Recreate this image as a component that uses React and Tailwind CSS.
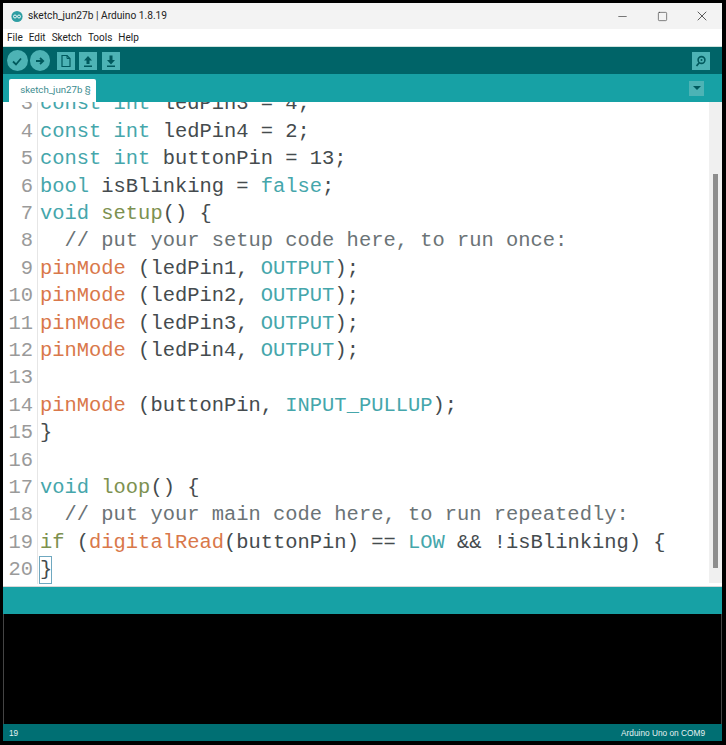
import { Minus, Square, X } from 'lucide-react';

const mono = "font-['Liberation_Mono','DejaVu_Sans_Mono',monospace]";
const teal = 'text-[#45a6ab]';
const orange = 'text-[#d9784a]';
const olive = 'text-[#7d9150]';
const dark = 'text-[#454b4e]';
const comment = 'text-[#6b7376]';

const lines = [
    [3, [['const', teal], [' ', dark], ['int', teal], [' ledPin3 = 4;', dark]]],
    [4, [['const', teal], [' ', dark], ['int', teal], [' ledPin4 = 2;', dark]]],
    [5, [['const', teal], [' ', dark], ['int', teal], [' buttonPin = 13;', dark]]],
    [6, [['bool', teal], [' isBlinking = ', dark], ['false', teal], [';', dark]]],
    [7, [['void', teal], [' ', dark], ['setup', olive], ['() {', dark]]],
    [8, [['  // put your setup code here, to run once:', comment]]],
    [9, [['pinMode', orange], [' (ledPin1, ', dark], ['OUTPUT', teal], [');', dark]]],
    [10, [['pinMode', orange], [' (ledPin2, ', dark], ['OUTPUT', teal], [');', dark]]],
    [11, [['pinMode', orange], [' (ledPin3, ', dark], ['OUTPUT', teal], [');', dark]]],
    [12, [['pinMode', orange], [' (ledPin4, ', dark], ['OUTPUT', teal], [');', dark]]],
    [13, []],
    [14, [['pinMode', orange], [' (buttonPin, ', dark], ['INPUT_PULLUP', teal], [');', dark]]],
    [15, [['}', dark]]],
    [16, []],
    [17, [['void', teal], [' ', dark], ['loop', olive], ['() {', dark]]],
    [18, [['  // put your main code here, to run repeatedly:', comment]]],
    [19, [['if', olive], [' (', dark], ['digitalRead', orange], ['(buttonPin) == ', dark], ['LOW', teal], [' && !isBlinking) {', dark]]],
];

const ToolIcon = ({ children, className = 'w-[18px] h-[18px]' }) => (
    <div className={`${className} bg-[#4db3b5] flex items-center justify-center`}>
        <svg width="14" height="14" viewBox="0 0 14 14">{children}</svg>
    </div>
);

const RoundIcon = ({ children }) => (
    <div className="w-[20.5px] h-[20.5px] rounded-full bg-[#4db3b5] flex items-center justify-center">
        <svg width="14" height="14" viewBox="0 0 14 14">{children}</svg>
    </div>
);

const CodeLine = ({ number, children }) => (
    <div className="flex h-[27.4px] items-center">
        <div className="w-[35px] h-full shrink-0 flex items-center justify-end pr-[4px] text-[#9a9a9a] border-r border-[#e6e6e6]">{number}</div>
        <div className="pl-[2px] whitespace-pre">{children}</div>
    </div>
);

export default function App() {
    return (
        <div className="w-[726px] h-[745px] bg-black pt-[3px] pb-[4px] pl-[3px] pr-[4px] flex flex-col overflow-hidden">
            <div className="h-[26px] shrink-0 bg-[#f3f3f3] flex items-center pl-[7px] text-[10.2px] text-[#222] font-['Roboto','Noto_Sans',sans-serif]">
                <svg width="15" height="15" viewBox="0 0 15 15">
                    <circle cx="7" cy="7.5" r="5.6" fill="#2e9ea3" />
                    <circle cx="5" cy="7.5" r="1.5" fill="none" stroke="#fff" strokeWidth="0.9" />
                    <circle cx="9" cy="7.5" r="1.5" fill="none" stroke="#fff" strokeWidth="0.9" />
                </svg>
                <span className="ml-[3px]">sketch_jun27b | Arduino 1.8.19</span>
                <div className="ml-auto flex items-center text-[#333]">
                    <div className="w-[40px] flex justify-center"><Minus size={13} strokeWidth={1.2} /></div>
                    <div className="w-[40px] flex justify-center"><Square size={11} strokeWidth={1.3} /></div>
                    <div className="w-[40px] flex justify-center"><X size={16} strokeWidth={1.2} /></div>
                </div>
            </div>

            <div className="h-[17px] shrink-0 bg-white flex items-center gap-[6px] pl-[4px] text-[10px] text-[#222] font-['Roboto','Noto_Sans',sans-serif]">
                <span>File</span><span>Edit</span><span>Sketch</span><span>Tools</span><span>Help</span>
            </div>

            <div className="h-[28px] shrink-0 bg-[#006468] border-t border-[#cfe3de] flex items-center pl-[4px] pr-[12px]">
                <div className="flex gap-[2px]">
                    <RoundIcon><path d="M3 7.5l3 3 5-6" fill="none" stroke="#00595d" strokeWidth="1.8" /></RoundIcon>
                    <RoundIcon><path d="M3 7h6M7 4l3.2 3L7 10" fill="none" stroke="#00595d" strokeWidth="1.8" /></RoundIcon>
                </div>
                <div className="flex gap-[4.5px] ml-[6.5px]">
                    <ToolIcon><path d="M3 1.5h5l3 3v8H3z" fill="none" stroke="#00595d" strokeWidth="1.2" /><path d="M8 1.5v3h3" fill="none" stroke="#00595d" /></ToolIcon>
                    <ToolIcon><path d="M7 2l4 4.5H8.5V10h-3V6.5H3z M3 11.5h8V13H3z" fill="#00595d" /></ToolIcon>
                    <ToolIcon><path d="M5.5 1.5h3V6H11l-4 4.5L3 6h2.5z M3 11.5h8V13H3z" fill="#00595d" /></ToolIcon>
                </div>
                <div className="ml-auto">
                    <ToolIcon>
                        <circle cx="7.5" cy="6" r="3.4" fill="none" stroke="#00595d" strokeWidth="1.6" />
                        <circle cx="7.5" cy="6" r="1" fill="#00595d" />
                        <path d="M5 9l-2.5 3" stroke="#00595d" strokeWidth="1.8" />
                    </ToolIcon>
                </div>
            </div>

            <div className="h-[28px] shrink-0 bg-[#17a1a5] flex items-end pl-[6px] pr-[4px]">
                <div className="h-[23px] w-[87px] bg-white rounded-t-[2px] flex items-center justify-center pl-[6px] text-[9.7px] text-[#3b8c8f] font-['Roboto','Noto_Sans',sans-serif]">
                    sketch_jun27b §
                </div>
                <div className="ml-auto self-center w-[15px] h-[15px] bg-[#4db3b5] flex items-center justify-center mr-[14px]">
                    <div className="w-0 h-0 border-x-[4px] border-x-transparent border-t-[4px] border-t-[#00595d]" />
                </div>
            </div>

            <div className="flex-1 flex min-h-0 bg-white">
                <div className="flex-1 overflow-hidden">
                    <div className={`-mt-[11px] text-[20.45px] leading-none ${mono}`}>
                        {lines.map(([number, parts]) => (
                            <CodeLine key={number} number={number}>
                                {parts.map(([text, color], i) => <span key={i} className={color}>{text}</span>)}
                            </CodeLine>
                        ))}
                        <CodeLine number={20}>
                            <div className={`w-[13px] h-[28px] -ml-[1px] border border-[#6fa8c0] flex items-center ${dark}`}>{'}'}</div>
                        </CodeLine>
                    </div>
                </div>
                <div className="w-[13px] shrink-0 mb-[3px] bg-[#f0f0f0] pt-[72px]">
                    <div className="w-[5px] ml-[4px] h-[394px] bg-[#8e8e8e]" />
                </div>
            </div>

            <div className="h-[28px] shrink-0 bg-[#17a1a5] border-t border-[#d8d8d8]" />
            <div className="h-[110px] shrink-0 bg-black border-x border-[#444]" />
            <div className="h-[17px] shrink-0 bg-[#006f73] flex items-center justify-between pt-[2px] pl-[6px] pr-[17px] text-[8.3px] text-[#e6f2f2] font-['Liberation_Sans',sans-serif]">
                <span>19</span>
                <span>Arduino Uno on COM9</span>
            </div>
        </div>
    );
}
